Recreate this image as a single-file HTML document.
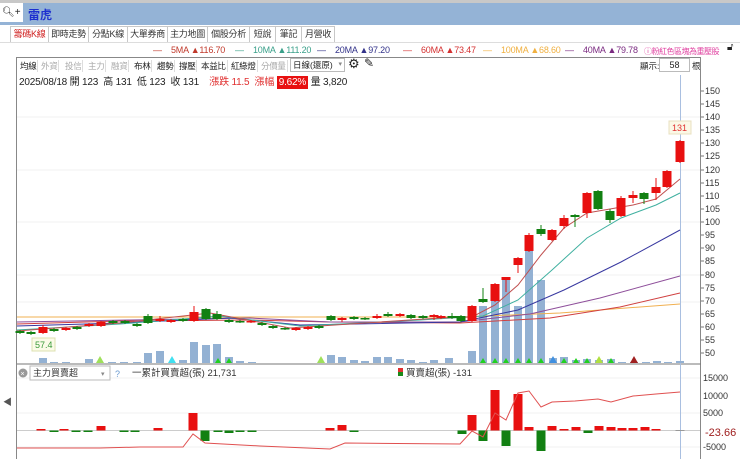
<!DOCTYPE html>
<html><head><meta charset="utf-8"><style>
*{margin:0;padding:0;box-sizing:border-box}
body{width:740px;height:459px;overflow:hidden;background:#fff;font-family:"Liberation Sans","Noto Sans CJK TC",sans-serif;font-size:10px;color:#222;position:relative}
.a{position:absolute;white-space:nowrap}
.tab{position:absolute;top:26px;height:17px;border:1px solid #c8c8c8;background:#fff;font-size:9px;line-height:15px;text-align:center;color:#333;white-space:nowrap;overflow:hidden;letter-spacing:-0.3px}
.btn{position:absolute;top:60px;height:12px;font-size:8.5px;line-height:12px;border-right:1px solid #ddd;padding:0 1px;color:#222;white-space:nowrap;letter-spacing:-0.3px}
.g{color:#aaa}
.ml{position:absolute;top:45px;font-size:9px;white-space:nowrap;letter-spacing:-0.2px}
</style></head><body>
<div class="a" style="left:0;top:0;width:740px;height:3px;background:#c8c8c8"></div>
<div class="a" style="left:0;top:3px;width:740px;height:22px;background:#94b3d6"></div>
<div class="a" style="left:0;top:3px;width:23px;height:19px;background:#fff;font-size:10px;line-height:19px;padding-left:2px">🔍︎+</div>
<div class="a" style="left:28px;top:6px;font-size:12px;font-weight:bold;color:#1d2fcf">雷虎</div>
<div class="tab" style="left:10px;width:39px;color:#d02020;border-bottom-color:#fff">籌碼K線</div>
<div class="tab" style="left:48px;width:41px">即時走勢</div>
<div class="tab" style="left:88px;width:40px">分點K線</div>
<div class="tab" style="left:127px;width:41px">大單券商</div>
<div class="tab" style="left:167px;width:41px">主力地圖</div>
<div class="tab" style="left:207px;width:43px">個股分析</div>
<div class="tab" style="left:249px;width:27px">短說</div>
<div class="tab" style="left:275px;width:27px">筆記</div>
<div class="tab" style="left:301px;width:34px">月營收</div>
<div class="a" style="left:0;top:42px;width:740px;height:1px;background:#ddd"></div>
<span class="ml" style="left:153px;color:#c0392b">—&nbsp;&nbsp;&nbsp;&nbsp;5MA ▲116.70</span>
<span class="ml" style="left:235px;color:#3aa08a">—&nbsp;&nbsp;&nbsp;&nbsp;10MA ▲111.20</span>
<span class="ml" style="left:317px;color:#33338a">—&nbsp;&nbsp;&nbsp;&nbsp;20MA ▲97.20</span>
<span class="ml" style="left:403px;color:#d43030">—&nbsp;&nbsp;&nbsp;&nbsp;60MA ▲73.47</span>
<span class="ml" style="left:483px;color:#f0b040">—&nbsp;&nbsp;&nbsp;&nbsp;100MA ▲68.60</span>
<span class="ml" style="left:565px;color:#7a2a80">—&nbsp;&nbsp;&nbsp;&nbsp;40MA ▲79.78</span>
<span class="ml" style="left:644px;color:#e040a0;font-size:8px;top:46px;letter-spacing:-0.5px">ⓘ粉紅色區塊為重壓股</span>
<div class="a" style="left:727px;top:42px;font-size:10px">🔓︎</div>
<div class="a" style="left:16px;top:57px;width:685px;height:402px;border:1px solid #888;border-bottom:none"></div>
<div class="btn" style="left:19px">均線</div><div class="btn g" style="left:40px">外資</div><div class="btn g" style="left:64px">投信</div><div class="btn g" style="left:87px">主力</div><div class="btn g" style="left:110px">融資</div><div class="btn" style="left:133px">布林</div><div class="btn" style="left:156px">趨勢</div><div class="btn" style="left:178px">撐壓</div><div class="btn" style="left:200px">本益比</div><div class="btn" style="left:230px">紅綠燈</div><div class="btn g" style="left:260px">分價量</div>
<div class="a" style="left:290px;top:58px;width:55px;height:14px;border:1px solid #bbb;font-size:8.5px;line-height:12px;padding-left:2px">日線(還原)<span style="position:absolute;right:2px;color:#888;font-size:7px">▾</span></div>
<div class="a" style="left:348px;top:56px;font-size:13px">⚙︎</div>
<div class="a" style="left:364px;top:56px;font-size:12px">✎</div>
<div class="a" style="left:640px;top:60px;font-size:8.5px">顯示:</div>
<div class="a" style="left:659px;top:58px;width:31px;height:14px;border:1px solid #bbb;font-size:9px;line-height:12px;text-align:center">58</div>
<div class="a" style="left:692px;top:60px;font-size:8.5px">根</div>
<div class="a" style="left:19px;top:73px;font-size:10px;letter-spacing:-0.2px">2025/08/18 開 123&nbsp; 高 131&nbsp; 低 123&nbsp; 收 131&nbsp;&nbsp;&nbsp; <span style="color:#e03030">漲跌 11.5&nbsp; 漲幅</span> <span style="background:#e81010;color:#fff;padding:1px 2px">9.62%</span> 量 3,820</div>
<div class="a" style="left:3px;top:395px;font-size:9px;color:#555">◀</div>
<svg class="a" style="left:0;top:0" width="740" height="459" id="s">
<g stroke="#f0f0f0" stroke-width="1">
<line x1="17" x2="700" y1="117" y2="117"/><line x1="17" x2="700" y1="170" y2="170"/><line x1="17" x2="700" y1="222" y2="222"/><line x1="17" x2="700" y1="275" y2="275"/><line x1="17" x2="700" y1="302" y2="302"/>
<line x1="17" x2="700" y1="378" y2="378"/><line x1="17" x2="700" y1="413" y2="413"/><line x1="17" x2="700" y1="447" y2="447"/>
</g>
<line x1="17" x2="700" y1="430.5" y2="430.5" stroke="#ccc"/>
<line x1="17" x2="701" y1="364" y2="364" stroke="#777"/>
<line x1="680.5" x2="680.5" y1="75" y2="459" stroke="#a9bfe0"/>
<g id="vol" fill="#93b1d3"></g>
<g id="ma" fill="none" stroke-width="1"></g>
<g id="k"></g>
<g id="sub"></g>
<g font-size="9" fill="#333" id="ax"></g>
<rect x="669" y="121" width="22" height="13" fill="#fbf8e6" stroke="#e8e0c0"/><text x="672" y="131" font-size="9" fill="#e03030">131</text>
<rect x="32" y="338" width="23" height="13" fill="#fbfbe8" stroke="#dde0b0"/><text x="35" y="348" font-size="9" fill="#3a9a3a">57.4</text>
<rect x="30" y="366" width="80" height="14" fill="#fff" stroke="#bbb"/><text x="33" y="376" font-size="9" fill="#333">主力買賣超</text><text x="101" y="376" font-size="7" fill="#888">▾</text>
<circle cx="23" cy="373" r="4.5" fill="#999"/><text x="20.5" y="376" font-size="7" fill="#fff">×</text>
<text x="115" y="377" font-size="9" fill="#6a9ad0">?</text>
<text x="132" y="376" font-size="9.5" fill="#333">一累計買賣超(張) 21,731</text>
<rect x="398" y="368" width="5" height="4" fill="#e03030"/><rect x="398" y="372" width="5" height="4" fill="#1a8a1a"/>
<text x="406" y="376" font-size="9.5" fill="#333">買賣超(張) -131</text>
<text x="705" y="436" font-size="11" fill="#a02020">-23.66</text>
</svg>
<script>
var NS="http://www.w3.org/2000/svg";
function el(p,t,a){var e=document.createElementNS(NS,t);for(var k in a)e.setAttribute(k,a[k]);document.getElementById(p).appendChild(e);return e;}
var ax=[[150,91],[145,104],[140,117],[135,130],[130,143],[125,156],[120,170],[115,183],[110,196],[105,209],[100,222],[95,235],[90,248],[85,261],[80,275],[75,288],[70,301],[65,314],[60,327],[55,340],[50,353]];
ax.forEach(function(a){var t=el("ax","text",{x:705,y:a[1]+3});t.textContent=a[0];el("ax","line",{x1:701,x2:704,y1:a[1],y2:a[1],stroke:"#777"});});
[["15000",378],["10000",396],["5000",413],["-5000",447]].forEach(function(a){var t=el("ax","text",{x:703,y:a[1]+3});t.textContent=a[0];});
var R="#e81010",G="#128012";
var K=[[20,331,333,330,334,G],[31,332,334,331,335,G],[43,327,333,325,334,R],[54,329,331,328,332,G],[66,328,330,327,331,R],[77,327,329,326,330,G],[89,324,326,323,327,R],[101,322,326,321,327,R],[113,321,323,320,324,G],[125,321,323,320,324,G],[137,324,326,323,327,G],[148,316,323,314,324,G],[160,319,321,316,322,R],[171,320,322,319,323,R],[183,319,321,318,322,G],[194,312,321,306,322,R],[206,309,319,308,320,G],[217,314,319,311,320,G],[229,320,322,319,323,G],[240,321,322,320,323,G],[251,321,322,320,323,R],[262,323,325,322,326,G],[273,326,328,325,329,G],[285,328,329,327,330,G],[296,328,330,327,331,R],[308,327,329,326,330,R],[319,326,328,325,329,G],[331,316,320,315,321,G],[342,318,320,317,322,R],[354,317,319,316,320,G],[365,318,319,317,320,G],[377,316,318,314,319,R],[388,314,316,312,317,G],[400,314,316,313,317,R],[411,315,318,314,319,G],[423,316,318,315,319,G],[434,315,317,314,320,R],[441,316,318,315,319,R],[452,316,318,313,319,G],[461,316,321,315,322,G],[472,306,321,305,322,R],[483,299,302,288,303,G],[495,284,301,283,302,R],[506,277,280,277,292,R],[518,258,265,257,273,R],[529,235,251,233,252,R],[541,229,234,225,236,G],[552,230,240,229,241,R],[564,218,226,215,229,R],[575,215,217,214,227,G],[587,193,213,192,218,R],[598,191,209,190,210,G],[610,211,220,209,223,G],[621,198,216,196,217,R],[633,195,198,191,203,R],[644,193,199,192,204,G],[656,187,193,178,200,R],[667,171,187,170,188,R],[680,141,162,140,163,R]];
K.forEach(function(c){el("k","line",{x1:c[0],x2:c[0],y1:c[3],y2:c[4],stroke:c[5]});el("k","rect",{x:c[0]-4.5,y:c[1],width:9,height:Math.max(1.5,c[2]-c[1]),fill:c[5]});});
var V=[[43,5],[54,1],[66,1],[89,4],[112,1],[124,1],[137,1],[148,10],[160,12],[183,3],[194,21],[206,18],[217,19],[229,6],[240,2],[252,1],[331,8],[342,6],[354,3],[365,2],[377,6],[388,6],[400,4],[411,3],[423,1],[434,3],[449,5],[472,12],[483,57],[495,62],[506,84],[518,57],[529,112],[541,83],[553,5],[564,6],[576,3],[587,4],[599,3],[611,4],[622,1],[634,1],[646,1],[657,2],[668,1],[680,2]];
V.forEach(function(v){el("vol","rect",{x:v[0]-4,y:363-v[1],width:8,height:v[1]});});
[[100,"#9ee05a"],[172,"#40e0f0"],[321,"#9ee05a"],[553,"#4090e0"],[599,"#b0e040"],[634,"#a02020"]].forEach(function(t){el("vol","polygon",{points:(t[0]-4)+",363 "+(t[0]+4)+",363 "+t[0]+",356",fill:t[1]});});
[218,229,483,495,506,518,529,541,564,576,587,611].forEach(function(x){el("vol","polygon",{points:(x-3)+",363 "+(x+3)+",363 "+x+",358",fill:"#20d020"});});
function pl(c,pts){el("ma","polyline",{points:pts,stroke:c});}
pl("#f0b050","17,317 200,317 460,317 560,313 680,304");
pl("#d04040","17,324 120,321 250,320 330,322 460,323 550,318 620,307 680,293");
pl("#8e4e9a","17,322 130,320 250,318 330,322 460,322 530,314 600,298 680,276");
pl("#3838a0","17,326 120,323 230,318 300,325 460,322 518,310 564,290 621,262 680,230");
pl("#3fb0a0","17,330 120,324 220,316 300,326 420,320 483,316 518,300 552,270 587,238 621,218 656,205 680,193");
pl("#c05050","17,331 120,323 210,313 290,328 440,318 472,317 495,305 518,285 541,255 564,228 587,213 610,209 633,205 656,199 680,179");
var S=[[41,429,430.5,R],[54,430.5,432,G],[64,429,430.5,R],[76,430.5,432,G],[88,430.5,432,G],[101,426,430.5,R],[124,430.5,432,G],[135,430.5,432,G],[158,428,430.5,R],[193,413,430.5,R],[205,430.5,441,G],[218,430.5,432,G],[229,430.5,433,G],[240,430.5,432,G],[252,430.5,432,G],[330,428,430.5,R],[342,425,430.5,R],[354,430.5,432,G],[462,430.5,434,G],[472,415,430.5,R],[483,430.5,441,G],[495,390,430.5,R],[506,430.5,446,G],[518,394,430.5,R],[529,427,430.5,R],[541,430.5,451,G],[552,426,430.5,R],[564,429,430.5,R],[576,427,430.5,R],[588,430.5,433,G],[599,426,430.5,R],[611,427,430.5,R],[622,428,430.5,R],[633,428,430.5,R],[645,427,430.5,R],[656,429,430.5,R],[680,430,431,"#999"]];
S.forEach(function(s){el("sub","rect",{x:s[0]-4.5,y:s[1],width:9,height:s[2]-s[1],fill:s[3]});});
el("sub","polyline",{points:"17,448 100,448 140,447 183,447 193,434 205,443 260,446 330,449 345,443 460,444 472,431 483,437 495,413 506,420 518,393 529,391 541,407 552,402 575,401 598,399 611,402 633,396 656,394 680,392",fill:"none",stroke:"#e05050"});
</script>
</body></html>
